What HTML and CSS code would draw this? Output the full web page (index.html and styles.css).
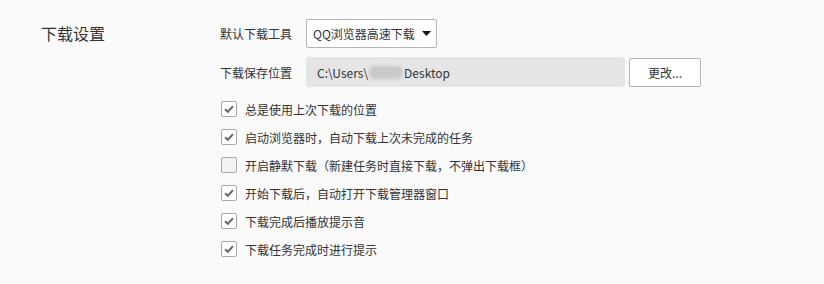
FILE: index.html
```html
<!DOCTYPE html>
<html lang="zh-CN">
<head>
<meta charset="utf-8">
<link rel="stylesheet" href="styles.css">
</head>
<body>
<div class="page">
  <div class="section-title">下载设置</div>
  <div class="content">
    <div class="row">
      <div class="label">默认下载工具</div>
      <div class="select">
        <span>QQ浏览器高速下载</span>
        <svg class="arrow" width="9" height="5" viewBox="0 0 9 5"><path d="M0 0H9L4.5 5Z" fill="#111"/></svg>
      </div>
    </div>
    <div class="row row-path">
      <div class="label">下载保存位置</div>
      <div class="path">C:\Users\<span class="blur"></span>Desktop</div>
      <button class="btn">更改...</button>
    </div>
    <div class="checks">
      <label class="check"><span class="box on"><svg width="12" height="10" viewBox="0 0 12 10"><path d="M2 5.2L4.8 7.8L10 2.2" fill="none" stroke="#6a6a6a" stroke-width="2"/></svg></span>总是使用上次下载的位置</label>
      <label class="check"><span class="box on"><svg width="12" height="10" viewBox="0 0 12 10"><path d="M2 5.2L4.8 7.8L10 2.2" fill="none" stroke="#6a6a6a" stroke-width="2"/></svg></span>启动浏览器时，自动下载上次未完成的任务</label>
      <label class="check"><span class="box"></span>开启静默下载（新建任务时直接下载，不弹出下载框）</label>
      <label class="check"><span class="box on"><svg width="12" height="10" viewBox="0 0 12 10"><path d="M2 5.2L4.8 7.8L10 2.2" fill="none" stroke="#6a6a6a" stroke-width="2"/></svg></span>开始下载后，自动打开下载管理器窗口</label>
      <label class="check"><span class="box on"><svg width="12" height="10" viewBox="0 0 12 10"><path d="M2 5.2L4.8 7.8L10 2.2" fill="none" stroke="#6a6a6a" stroke-width="2"/></svg></span>下载完成后播放提示音</label>
      <label class="check"><span class="box on"><svg width="12" height="10" viewBox="0 0 12 10"><path d="M2 5.2L4.8 7.8L10 2.2" fill="none" stroke="#6a6a6a" stroke-width="2"/></svg></span>下载任务完成时进行提示</label>
    </div>
  </div>
</div>
</body>
</html>
```
FILE: styles.css
```css
html, body {
  margin: 0;
  background: #fafafa;
}
body {
  font-family: "Noto Sans CJK SC", "Noto Sans", sans-serif;
  color: #333;
  font-size: 12px;
}
.page {
  display: flex;
  padding: 19px 0 0 41px;
}
.section-title {
  width: 179px;
  font-size: 16px;
  line-height: 29px;
  color: #333;
}
.content {
  display: flex;
  flex-direction: column;
}
.row {
  display: flex;
  align-items: center;
  height: 29px;
}
.row-path {
  margin-top: 9px;
  height: 30px;
}
.label {
  width: 86px;
  line-height: 29px;
}
.select {
  box-sizing: border-box;
  width: 131px;
  height: 29px;
  border: 1px solid #b4b4b4;
  border-radius: 2px;
  background: #fff;
  display: flex;
  align-items: center;
  justify-content: space-between;
  padding: 0 5px 0 6px;
}
.select span {
  font-size: 12px;
}
.arrow {
  display: block;
}
.path {
  box-sizing: border-box;
  width: 319px;
  height: 30px;
  background: #e5e5e5;
  border-radius: 3px;
  padding-left: 11px;
  display: flex;
  align-items: center;
  font-size: 12px;
}
.blur {
  display: inline-block;
  width: 34px;
  height: 13px;
  background: #c9c9c9;
  border-radius: 6px;
  filter: blur(1.5px);
  margin: 0 1px 0 1px;
}
.btn {
  box-sizing: border-box;
  width: 72px;
  height: 29px;
  margin-left: 4px;
  border: 1px solid #b4b4b4;
  border-radius: 2px;
  background: #fff;
  font-family: inherit;
  font-size: 12px;
  color: #333;
  padding: 0;
}
.checks {
  margin-top: 8px;
  display: flex;
  flex-direction: column;
}
.check {
  display: flex;
  align-items: center;
  height: 28px;
}
.box {
  box-sizing: border-box;
  width: 16px;
  height: 16px;
  margin-left: 1px;
  margin-right: 8px;
  border: 1px solid #a8a8a8;
  border-radius: 2px;
  background: #f2f2f2;
  display: flex;
  align-items: center;
  justify-content: center;
}
.box.on {
  background: #fff;
}
```
